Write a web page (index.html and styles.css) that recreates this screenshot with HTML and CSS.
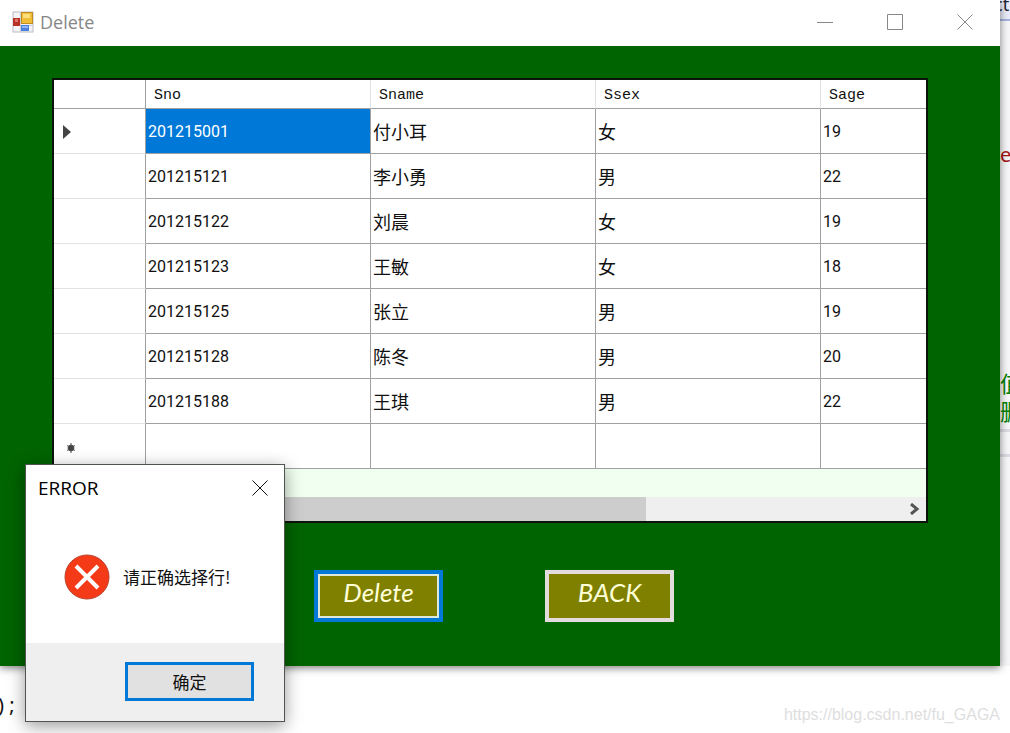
FILE: index.html
```html
<!DOCTYPE html>
<html lang="zh-CN">
<head>
<meta charset="utf-8">
<title>Delete</title>
<link rel="stylesheet" href="styles.css">
</head>
<body>
<div class="desktop">
  <div class="editor">
    <div class="editor-tab">ct</div>
    <div class="editor-code">
      <span class="string">e</span>
      <span class="comment">值</span>
      <span class="comment">删</span>
    </div>
    <div class="editor-split"></div>
  </div>

  <main class="window">
    <header class="titlebar">
      <svg class="app-icon" viewBox="0 0 22 22" aria-hidden="true">
        <rect x="1" y="1" width="20" height="20" fill="#f4f4f6" stroke="#b9bcc4"/>
        <path d="M8.500 1V21M1 14.500H21" stroke="#c9ccd4"/>
        <rect x="1" y="7" width="7" height="8" fill="#b93029"/>
        <rect x="3" y="8" width="3" height="3" fill="#df7468"/>
        <rect x="9.500" y="1.500" width="11" height="11" fill="#f0bd36" stroke="#c28d22"/>
        <path d="M11 3H18V7H11Z" fill="#fbdf7c"/>
        <rect x="9" y="14" width="8" height="6" fill="#4b7fdc"/>
        <path d="M10 15H16V17H10Z" fill="#8fb4f2"/>
      </svg>
      <h1 class="title">Delete</h1>
      <div class="controls">
        <button class="control" aria-label="Minimize"><svg viewBox="0 0 16 16"><path d="M0 8.500H16"/></svg></button>
        <button class="control" aria-label="Maximize"><svg viewBox="0 0 16 16"><path d="M.5.5H15.500V15.500H.5Z"/></svg></button>
        <button class="control" aria-label="Close"><svg viewBox="0 0 16 16"><path d="M.5.5L15.500 15.500M15.500.5L.5 15.500"/></svg></button>
      </div>
    </header>
    <div class="client">
      <div class="grid">
        <table class="records">
          <colgroup><col class="col-head"><col class="col-data"><col class="col-data"><col class="col-data"><col class="col-data"></colgroup>
          <thead>
            <tr><th></th><th>Sno</th><th>Sname</th><th>Ssex</th><th>Sage</th></tr>
          </thead>
          <tbody>
            <tr><th><svg class="marker" viewBox="0 0 9 14"><path d="M0 0L8 7L0 14Z"/></svg></th><td class="selected">201215001</td><td class="han">付小耳</td><td class="han">女</td><td>19</td></tr>
            <tr><th></th><td>201215121</td><td class="han">李小勇</td><td class="han">男</td><td>22</td></tr>
            <tr><th></th><td>201215122</td><td class="han">刘晨</td><td class="han">女</td><td>19</td></tr>
            <tr><th></th><td>201215123</td><td class="han">王敏</td><td class="han">女</td><td>18</td></tr>
            <tr><th></th><td>201215125</td><td class="han">张立</td><td class="han">男</td><td>19</td></tr>
            <tr><th></th><td>201215128</td><td class="han">陈冬</td><td class="han">男</td><td>20</td></tr>
            <tr><th></th><td>201215188</td><td class="han">王琪</td><td class="han">男</td><td>22</td></tr>
            <tr><th class="new-row"><svg class="star" viewBox="0 0 10 10"><path d="M5 0V10M1 2.500L9 7.500M9 2.500L1 7.500"/><circle cx="5" cy="5" r="3"/></svg></th><td></td><td></td><td></td><td></td></tr>
          </tbody>
        </table>
        <div class="scrollbar">
          <div class="thumb"></div>
          <button class="scroll-next" aria-label="Scroll right"><svg viewBox="0 0 10 12"><path d="M1 1L7 6L1 11"/></svg></button>
        </div>
      </div>
      <div class="actions">
        <button class="action focused">Delete</button>
        <button class="action">BACK</button>
      </div>
    </div>
  </main>

  <footer class="backdrop">
    <code class="code-tail">) ;</code>
    <span class="watermark">https://blog.csdn.net/fu_GAGA</span>
  </footer>

  <section class="dialog" role="alertdialog" aria-labelledby="dialog-title" aria-describedby="dialog-text">
    <header class="dialog-bar">
      <h2 class="dialog-title" id="dialog-title">ERROR</h2>
      <button class="dialog-close" aria-label="Close"><svg viewBox="0 0 16 16"><path d="M.5.5L15.500 15.500M15.500.5L.5 15.500"/></svg></button>
    </header>
    <div class="dialog-body">
      <svg class="error-icon" viewBox="0 0 46 46" aria-hidden="true"><circle cx="23" cy="23" r="22" fill="#f53a17" stroke="#b8402c"/><path d="M12 12L34 34M34 12L12 34" stroke="#fff" stroke-width="4"/></svg>
      <p class="dialog-text" id="dialog-text">请正确选择行!</p>
    </div>
    <div class="dialog-footer"><button class="confirm">确定</button></div>
  </section>
</div>
</body>
</html>
```

FILE: styles.css
```css
* { box-sizing: border-box; }
body { margin: 0; background: #fff; color: #111; font-family: "Open Sans", "Noto Sans CJK SC", sans-serif; }
button { margin: 0; padding: 0; border: 0; background: none; font: inherit; cursor: pointer; }
h1, h2, p { margin: 0; font-weight: 400; }
svg { display: block; }

.desktop { position: relative; min-height: 100vh; overflow: hidden; display: flex; flex-direction: column; }

.editor { position: absolute; top: 0; right: 0; width: 10px; height: 666px; overflow: hidden; background: #f6f6f8; }
.editor-tab { height: 21px; border-bottom: 2px solid #a5b3dc; background: #e9ecf8; font: 18px/8px "Noto Sans", sans-serif; text-indent: -6px; color: #223; }
.editor-code { height: 408px; padding-top: 120px; font: 20px/28px "Noto Sans", "Noto Sans CJK SC", sans-serif; }
.editor-code span { display: block; }
.editor-code .string { height: 228px; color: #a31515; }
.editor-code .comment { font-size: 22px; color: #008000; }
.editor-split { height: 28px; border: solid #dcdce4; border-width: 3px 0; }

.window { position: relative; margin-right: 10px; background: #006400; box-shadow: 0 2px 8px rgba(0, 0, 0, .5); }
.titlebar { display: flex; align-items: center; height: 46px; padding: 0 27px 2px 12px; background: #fff; }
.app-icon { width: 22px; height: 22px; }
.title { margin-left: 6px; font-size: 18px; line-height: 24px; color: #868686; }
.controls { display: flex; gap: 54px; margin-left: auto; }
.control { width: 16px; height: 16px; }
.control svg, .dialog-close svg { width: 16px; height: 16px; fill: none; stroke: #888; }

.client { padding: 32px 72px 44px 52px; }
.grid { overflow: hidden; border: 2px solid #0b140b; background: #f0fff0; }
.records { width: 992px; table-layout: fixed; border-collapse: separate; border-spacing: 0; background: #fff; font: 16px/20px "Roboto", "Noto Sans CJK SC", sans-serif; }
.col-head { width: 92px; }
.col-data { width: 225px; }
.records th, .records td { height: 45px; padding: 2px 2px 0; border: solid #a0a0a0; border-width: 0 1px 1px 0; text-align: left; font-weight: 400; }
.records thead th { height: 29px; padding: 3px 8px 0; border-right-color: #e2e2e2; font: 15px/20px "Liberation Mono", monospace; }
.records thead th:first-child { border-right-color: #a0a0a0; }
.records tbody th { padding-left: 9px; border-bottom-color: #e2e2e2; }
.records .han { padding-top: 4px; font-size: 18px; }
.records .selected { background: #0078d7; color: #fff; }
.records .new-row { padding: 4px 0 0 12px; }
.marker { width: 9px; height: 14px; fill: #444; }
.star { width: 10px; height: 10px; fill: #444; stroke: #555; }
.scrollbar { display: flex; justify-content: space-between; align-items: center; height: 24px; margin-top: 28px; padding-left: 24px; background: #efefef; }
.thumb { width: 67%; height: 24px; background: #cdcdcd; }
.scroll-next { padding: 6px; }
.scroll-next svg { width: 10px; height: 12px; fill: none; stroke: #555; stroke-width: 3; }

.actions { display: flex; justify-content: center; gap: 102px; padding: 47px 0 0 8px; }
.action { width: 129px; height: 52px; padding-bottom: 8px; border: 4px solid #e3dcdc; background: #808000; color: #ffffd8; font: italic 26px/28px "Lato", cursive; }
.focused { border-color: #0078d7; box-shadow: inset 0 0 0 2px #dce8dc; }

.backdrop { flex: 1; display: flex; justify-content: space-between; align-items: flex-end; padding: 0 10px 8px 0; }
.code-tail { font: 20px/40px "Noto Sans", sans-serif; text-indent: -2px; }
.watermark { font: 16px/20px "Liberation Sans", sans-serif; color: #dedede; }

.dialog { position: absolute; left: 25px; top: 464px; width: 260px; border: 1px solid #4d554d; background: #fff; box-shadow: 0 4px 16px rgba(0, 0, 0, .4); }
.dialog-bar { display: flex; justify-content: space-between; align-items: center; height: 45px; padding: 0 16px 0 12px; }
.dialog-title { font-size: 19px; line-height: 24px; color: #000; }
.dialog-close { width: 16px; height: 16px; }
.dialog-close svg { stroke: #111; }
.dialog-body { display: flex; align-items: center; gap: 13px; height: 133px; padding: 0 39px 0 38px; }
.error-icon { width: 46px; height: 46px; }
.dialog-text { font: 17px/24px "Noto Sans CJK SC", sans-serif; white-space: nowrap; }
.dialog-footer { display: flex; justify-content: flex-end; padding: 19px 30px 20px; background: #efefef; }
.confirm { width: 129px; height: 39px; border: 3px solid #0078d7; background: #e1e1e1; color: #111; font: 17px/24px "Noto Sans CJK SC", sans-serif; }
```
